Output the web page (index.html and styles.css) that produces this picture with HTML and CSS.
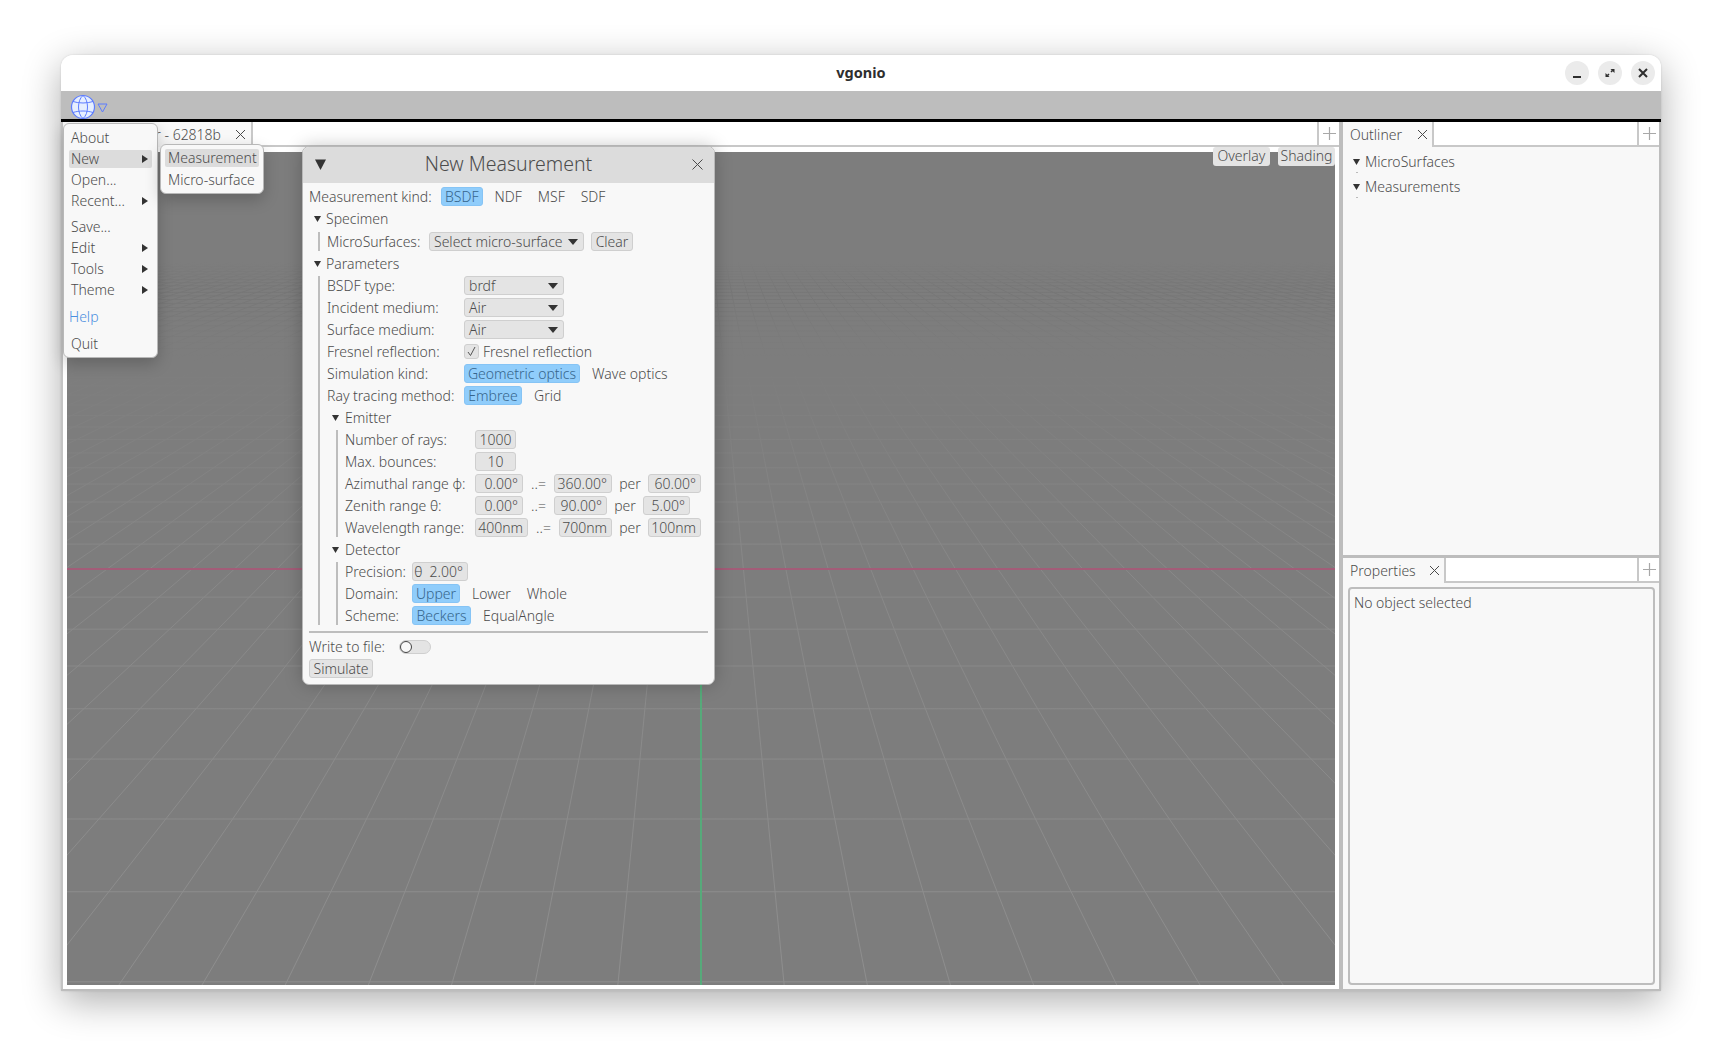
FILE: index.html
```html
<!DOCTYPE html>
<html lang="en">
<head>
<meta charset="utf-8">
<title>vgonio</title>
<link rel="stylesheet" href="styles.css">
</head>
<body>
<div class="window">
  <header class="titlebar">
    <span class="title">vgonio</span>
    <div class="wm">
      <span class="wm-btn"><svg width="24" height="24" viewBox="0 0 24 24"><path d="M8 16h8" class="wm-ic"/></svg></span>
      <span class="wm-btn"><svg width="24" height="24" viewBox="0 0 24 24"><path d="M12.500 8h4v4zM11.500 16h-4v-4z" class="wm-fill"/><path d="M14.500 9.500l-1.500 1.500M9.500 14.500l1.500-1.500" class="wm-thin"/></svg></span>
      <span class="wm-btn"><svg width="24" height="24" viewBox="0 0 24 24"><path d="M8 8l8 8M16 8l-8 8" class="wm-ic"/></svg></span>
    </div>
  </header>
  <div class="toolbar">
    <svg class="globe" width="26" height="26" viewBox="0 0 26 26"><circle cx="13" cy="13" r="11.500" class="globe-bg"/><path d="M13 1.500C7 6 7 20 13 24.500M13 1.500C19 6 19 20 13 24.500M3 7.500C9 9.500 17 9.500 23 7.500M3 18.500C9 16.500 17 16.500 23 18.500" class="globe-ln"/></svg>
    <svg class="globe-caret" width="11" height="10" viewBox="0 0 11 10"><path d="M1 1h9L5.500 9z" class="globe-ln"/></svg>
  </div>
  <div class="blackline"></div>
  <div class="workspace">
    <section class="left">
      <div class="tabbar tabbar-view">
        <div class="tab tab-view"><span>r - 62818b</span><svg class="x" width="11" height="11" viewBox="0 0 11 11"><path d="M1 1l9 9M10 1l-9 9"/></svg></div>
        <div class="tab-fill"></div>
        <div class="plus"><svg width="13" height="13" viewBox="0 0 13 13"><path d="M6.500 0v13M0 6.500h13"/></svg></div>
      </div>
      <div class="viewport-wrap">
        <div class="viewport">
          <svg id="grid" class="grid" viewBox="0 0 1268 833" preserveAspectRatio="none">
            <defs>
              <linearGradient id="fade" gradientUnits="userSpaceOnUse" x1="0" y1="0" x2="0" y2="833">
                <stop offset="0.130" stop-color="#7d7d7d"/>
                <stop offset="0.165" stop-color="#767676"/>
                <stop offset="0.200" stop-color="#797979"/>
                <stop offset="0.255" stop-color="#7d7d7d"/>
                <stop offset="0.300" stop-color="#7f7f7f"/>
                <stop offset="0.500" stop-color="#888888"/>
                <stop offset="1" stop-color="#8e8e8e"/>
              </linearGradient>
            </defs>
            <path id="grid-lines" class="grid-lines"/>
            <path class="axis-x" d="M0 417H1268"/>
            <path class="axis-y" d="M634 417V833"/>
          </svg>
          <div class="view-tools">
            <span class="btn">Overlay</span>
            <span class="btn">Shading</span>
          </div>
        </div>
      </div>
    </section>
    <div class="vsplit"></div>
    <aside class="right">
      <div class="tabbar">
        <div class="tab tab-outliner"><span>Outliner</span><svg class="x" width="11" height="11" viewBox="0 0 11 11"><path d="M1 1l9 9M10 1l-9 9"/></svg></div>
        <div class="tab-fill"></div>
        <div class="plus"><svg width="13" height="13" viewBox="0 0 13 13"><path d="M6.500 0v13M0 6.500h13"/></svg></div>
      </div>
      <div class="outliner">
        <div class="tree-item"><svg class="arrow" width="7" height="6" viewBox="0 0 7 6"><path d="M0 0h7L3.500 6z"/></svg><span>MicroSurfaces</span></div>
        <div class="tree-dot"></div>
        <div class="tree-item"><svg class="arrow" width="7" height="6" viewBox="0 0 7 6"><path d="M0 0h7L3.500 6z"/></svg><span>Measurements</span></div>
        <div class="tree-dot"></div>
      </div>
      <div class="hsplit"></div>
      <div class="tabbar">
        <div class="tab tab-props"><span>Properties</span><svg class="x" width="11" height="11" viewBox="0 0 11 11"><path d="M1 1l9 9M10 1l-9 9"/></svg></div>
        <div class="tab-fill"></div>
        <div class="plus"><svg width="13" height="13" viewBox="0 0 13 13"><path d="M6.500 0v13M0 6.500h13"/></svg></div>
      </div>
      <div class="props-wrap"><div class="props-box">No object selected</div></div>
    </aside>
  </div>

  <nav class="menu">
    <div class="mi">About</div>
    <div class="mi mi-on"><span>New</span><i class="mi-arrow"></i></div>
    <div class="mi">Open...</div>
    <div class="mi"><span>Recent...</span><i class="mi-arrow"></i></div>
    <div class="mi mi-save">Save...</div>
    <div class="mi"><span>Edit</span><i class="mi-arrow"></i></div>
    <div class="mi"><span>Tools</span><i class="mi-arrow"></i></div>
    <div class="mi"><span>Theme</span><i class="mi-arrow"></i></div>
    <div class="mi mi-gap mi-help">Help</div>
    <div class="mi mi-gap">Quit</div>
  </nav>
  <nav class="submenu">
    <div class="mi mi-on">Measurement</div>
    <div class="mi">Micro-surface</div>
  </nav>

  <div class="dialog">
    <div class="dlg-head">
      <svg width="11" height="11" viewBox="0 0 11 11" class="dlg-tri"><path d="M0 .5h11L5.500 11z"/></svg>
      <span class="dlg-title">New Measurement</span>
      <svg class="x dlg-x" width="11" height="11" viewBox="0 0 11 11"><path d="M.5.500l10 10M10.500.500l-10 10"/></svg>
    </div>
    <div class="dlg-body">
      <div class="row"><span class="lb-kind">Measurement kind:</span><span class="sel on">BSDF</span><span class="sel">NDF</span><span class="sel">MSF</span><span class="sel">SDF</span></div>

      <div class="head"><svg class="arrow" width="7" height="6" viewBox="0 0 7 6"><path d="M0 0h7L3.500 6z"/></svg><span>Specimen</span></div>
      <div class="sect sect-micro">
        <div class="row"><span class="lb-micro">MicroSurfaces:</span><span class="btn combo combo-wide"><span>Select micro-surface</span><svg class="caret" width="10" height="6" viewBox="0 0 10 6"><path d="M0 0h10L5 6z"/></svg></span><span class="btn clear">Clear</span></div>
      </div>

      <div class="head"><svg class="arrow" width="7" height="6" viewBox="0 0 7 6"><path d="M0 0h7L3.500 6z"/></svg><span>Parameters</span></div>
      <div class="sect">
        <div class="row"><span class="lb-par">BSDF type:</span><span class="btn combo"><span>brdf</span><svg class="caret" width="10" height="6" viewBox="0 0 10 6"><path d="M0 0h10L5 6z"/></svg></span></div>
        <div class="row"><span class="lb-par">Incident medium:</span><span class="btn combo"><span>Air</span><svg class="caret" width="10" height="6" viewBox="0 0 10 6"><path d="M0 0h10L5 6z"/></svg></span></div>
        <div class="row"><span class="lb-par">Surface medium:</span><span class="btn combo"><span>Air</span><svg class="caret" width="10" height="6" viewBox="0 0 10 6"><path d="M0 0h10L5 6z"/></svg></span></div>
        <div class="row"><span class="lb-par">Fresnel reflection:</span><span class="check"><svg width="11" height="11" viewBox="0 0 11 11"><path d="M2 6l2.500 3.500L9 1"/></svg></span><span>Fresnel reflection</span></div>
        <div class="row"><span class="lb-par">Simulation kind:</span><span class="sel on sel-geo">Geometric optics</span><span class="sel">Wave optics</span></div>
        <div class="row"><span class="lb-par">Ray tracing method:</span><span class="sel on sel-emb">Embree</span><span class="sel">Grid</span></div>

        <div class="head head-in"><svg class="arrow" width="7" height="6" viewBox="0 0 7 6"><path d="M0 0h7L3.500 6z"/></svg><span>Emitter</span></div>
        <div class="sect">
          <div class="row"><span class="lb-emit">Number of rays:</span><span class="btn num w41">1000</span></div>
          <div class="row"><span class="lb-emit">Max. bounces:</span><span class="btn num w41">10</span></div>
          <div class="row"><span class="lb-emit">Azimuthal range φ:</span><span class="btn num w48">0.00°</span><span class="op">..=</span><span class="btn num w58">360.00°</span><span class="per">per</span><span class="btn num w53">60.00°</span></div>
          <div class="row"><span class="lb-emit">Zenith range θ:</span><span class="btn num w48">0.00°</span><span class="op">..=</span><span class="btn num w53">90.00°</span><span class="per">per</span><span class="btn num w47">5.00°</span></div>
          <div class="row"><span class="lb-emit">Wavelength range:</span><span class="btn num w53">400nm</span><span class="op">..=</span><span class="btn num w53">700nm</span><span class="per">per</span><span class="btn num w53">100nm</span></div>
        </div>

        <div class="head head-in"><svg class="arrow" width="7" height="6" viewBox="0 0 7 6"><path d="M0 0h7L3.500 6z"/></svg><span>Detector</span></div>
        <div class="sect">
          <div class="row"><span class="lb-det">Precision:</span><span class="btn num w56">θ&nbsp;&nbsp;2.00°</span></div>
          <div class="row"><span class="lb-det">Domain:</span><span class="sel on sel-up">Upper</span><span class="sel">Lower</span><span class="sel">Whole</span></div>
          <div class="row"><span class="lb-det">Scheme:</span><span class="sel on sel-bec">Beckers</span><span class="sel">EqualAngle</span></div>
        </div>
      </div>

      <div class="rule"></div>
      <div class="row"><span class="lb-write">Write to file:</span><span class="toggle"><i></i></span></div>
      <div class="row"><span class="btn sim">Simulate</span></div>
    </div>
  </div>
</div>
<script src="grid.js"></script>
</body>
</html>
```

FILE: styles.css
```css
* { box-sizing: border-box; }
html, body { margin: 0; height: 100%; background: #fff; overflow: hidden; }
body {
  font-family: "Noto Sans", sans-serif;
  font-size: 14px;
  font-weight: 300;
  color: #4c4c4c;
  padding: 55px 0 0 61px;
}
svg { display: block; flex: none; }

.window {
  position: relative;
  width: 1600px;
  height: 936px;
  display: flex;
  flex-direction: column;
  background: #f8f8f8;
  border-radius: 12px 12px 2px 2px;
  box-shadow: 0 10px 38px rgba(0, 0, 0, .32), 0 0 2px rgba(0, 0, 0, .15);
}
.titlebar {
  height: 36px;
  flex: none;
  background: #fff;
  border-radius: 12px 12px 0 0;
  display: flex;
  align-items: center;
  justify-content: center;
  position: relative;
  padding-bottom: 2px;
}
.title { font-weight: 700; font-size: 14.5px; color: #2e2e2e; }
.wm { position: absolute; right: 6px; top: 6px; display: flex; gap: 9px; }
.wm-btn { width: 24px; height: 24px; border-radius: 50%; background: #ebebeb; }
.wm-ic { stroke: #2e2e2e; stroke-width: 2; fill: none; }
.wm-fill { fill: #2e2e2e; }
.wm-thin { stroke: #2e2e2e; stroke-width: 1.500; }

.toolbar {
  height: 28px;
  flex: none;
  background: #bdbdbd;
  display: flex;
  align-items: center;
  padding: 3px 0 0 9px;
  gap: 1px;
}
.globe-bg { fill: #e6efff; stroke: #5c7cff; stroke-width: 1.200; }
.globe-ln { fill: none; stroke: #5c7cff; stroke-width: 1; }
.globe-caret { margin-top: 3px; }
.blackline { height: 3px; flex: none; background: #000; }

.workspace { flex: 1; display: flex; min-height: 0; border-bottom: 2px solid #bdbdbd; }
.left { flex: 1; display: flex; flex-direction: column; min-width: 0; border-left: 2px solid #c4c4c4; }
.vsplit { width: 8px; flex: none; background: linear-gradient(90deg, #fff 0 4px, #bdbdbd 4px); }
.right { width: 318px; flex: none; display: flex; flex-direction: column; border-right: 2px solid #bdbdbd; }

.tabbar { height: 25px; flex: none; display: flex; background: #fff; border-bottom: 2px solid #c8c8c8; }
.tabbar-view { margin-right: -4px; position: relative; }
.tab {
  display: flex;
  align-items: center;
  background: #f8f8f8;
  border-right: 2px solid #c8c8c8;
  margin-bottom: -2px;
}
.tab-view { width: 190px; justify-content: flex-end; padding-right: 5px; gap: 14px; }
.tab-outliner { width: 91px; padding: 0 4px 0 7px; justify-content: space-between; }
.tab-props { width: 103px; padding: 0 4px 0 7px; justify-content: space-between; }
.x { stroke: #4a4a4a; stroke-width: 1; fill: none; }
.tab-fill { flex: 1; }
.plus {
  width: 22px;
  display: flex;
  align-items: center;
  justify-content: center;
  border-left: 2px solid #c8c8c8;
}
.plus path { stroke: #a8a8a8; stroke-width: 1.200; fill: none; }

.viewport-wrap { flex: 1; min-height: 0; padding: 5px 0 4px 4px; background: #fff; }
.viewport { position: relative; height: 100%; background: #7d7d7d; }
.grid { position: absolute; inset: 0; width: 100%; height: 100%; }
.grid-lines { fill: none; stroke: url(#fade); stroke-width: 1; }
.axis-x { stroke: #a35c78; stroke-width: 2; fill: none; }
.axis-y { stroke: #56aa7a; stroke-width: 2; fill: none; }
.view-tools { position: absolute; top: -5px; right: 0; display: flex; gap: 8px; }

.btn {
  display: inline-flex;
  align-items: center;
  height: 19px;
  padding: 0 4px;
  background: #e4e4e4;
  border: 1px solid #cfcfcf;
  border-radius: 3px;
  white-space: nowrap;
}
.view-tools .btn { width: 57px; justify-content: center; border: 0; padding: 0 0 2px; }

.outliner { height: 408px; flex: none; padding: 5px 10px 0 10px; display: flex; flex-direction: column; }
.tree-item { height: 19px; display: flex; align-items: center; gap: 5px; }
.tree-dot { height: 6px; position: relative; }
.tree-dot::after { content: ""; position: absolute; left: 3px; top: 1px; width: 2px; height: 1px; background: #bbb; }
.arrow { fill: #333; }
.hsplit { height: 3px; flex: none; background: #bdbdbd; }
.props-wrap { flex: 1; min-height: 0; padding: 4px 4px 4px 5px; }
.props-box {
  height: 100%;
  border: 2px solid #bdbdbd;
  border-radius: 4px;
  padding: 4px 4px;
}

.menu, .submenu, .dialog {
  position: absolute;
  background: #f8f8f8;
  border: 1px solid #b8b8b8;
  box-shadow: 0 6px 16px rgba(0, 0, 0, .2);
}
.menu {
  left: 2px;
  top: 68px;
  width: 95px;
  height: 235px;
  border-radius: 6px;
  padding: 5px 5px;
  display: flex;
  flex-direction: column;
  gap: 3px;
}
.submenu {
  left: 99px;
  top: 89px;
  width: 104px;
  height: 50px;
  border-radius: 6px;
  padding: 4px 4px;
  display: flex;
  flex-direction: column;
  gap: 4px;
}
.mi {
  height: 18px;
  flex: none;
  display: flex;
  align-items: center;
  justify-content: space-between;
  padding: 0 4px 1px 2px;
  border-radius: 2px;
  white-space: nowrap;
}
.submenu .mi { padding-left: 3px; }
.mi-on { background: #dcdcdc; }
.mi-save { margin-top: 5px; }
.mi-gap { margin-top: 6px; }
.mi-help { color: #4a8fe0; padding-left: 0; }
.mi-arrow { width: 0; height: 0; border-left: 6px solid #333; border-top: 4.500px solid transparent; border-bottom: 4.500px solid transparent; }

.dialog {
  left: 241px;
  top: 91px;
  width: 413px;
  height: 539px;
  border-radius: 7px;
  box-shadow: 0 0 18px rgba(0, 0, 0, .22);
}
.dlg-head {
  height: 36px;
  background: #dcdcdc;
  border-radius: 6px 6px 0 0;
  position: relative;
  display: flex;
  align-items: center;
  justify-content: center;
  padding-bottom: 4px;
}
.dlg-title { font-size: 19.500px; }
.dlg-tri { position: absolute; left: 12px; top: 12px; fill: #333; }
.dlg-x { position: absolute; right: 11px; top: 12px; }
.dlg-body { padding: 4px 6px; display: flex; flex-direction: column; gap: 3px; }

.row { min-height: 19px; display: flex; align-items: center; white-space: nowrap; }
.sel { height: 19px; display: inline-flex; align-items: center; padding: 0 4px; margin-right: 8px; border-radius: 3px; }
.sel.on { background: #90cdfb; border: 1px solid #86c4f5; color: #36658c; padding: 0 3px; justify-content: center; }
.sel-geo { width: 116px; }
.sel-emb { width: 58px; }
.sel-up { width: 48px; }
.sel-bec { width: 59px; }

.lb-kind { width: 132px; }
.lb-micro { width: 102px; }
.lb-par { width: 137px; }
.lb-emit { width: 130px; }
.lb-det { width: 67px; }
.lb-write { width: 90px; }

.head { height: 19px; display: flex; align-items: center; gap: 5px; padding-left: 5px; }
.head-in { gap: 6px; }
.sect { margin-left: 9px; border-left: 2px solid #bdbdbd; padding-left: 7px; display: flex; flex-direction: column; gap: 3px; }
.sect-micro { margin-top: 1px; }

.combo { justify-content: space-between; width: 100px; padding-right: 5px; }
.combo-wide { width: 155px; }
.caret { fill: #333; }
.clear { margin-left: 7px; width: 42px; justify-content: center; }
.check { width: 15px; height: 15px; margin-right: 4px; background: #e4e4e4; border: 1px solid #cfcfcf; border-radius: 3px; display: flex; align-items: center; justify-content: center; }
.check path { fill: none; stroke: #555; stroke-width: 1; }

.num { justify-content: flex-end; }
.w41 { width: 41px; justify-content: center; }
.w47 { width: 47px; }
.w48 { width: 48px; }
.w53 { width: 53px; }
.w56 { width: 56px; }
.w58 { width: 58px; }
.op { width: 31px; text-align: center; }
.per { width: 36px; text-align: center; }

.rule { height: 2px; background: #bdbdbd; margin: 3px 0 1px; }
.toggle { width: 32px; height: 14px; border-radius: 7px; background: #e4e4e4; border: 1px solid #cfcfcf; position: relative; }
.toggle i { position: absolute; left: 0; top: 0; width: 12px; height: 12px; border-radius: 50%; background: #f8f8f8; border: 1px solid #444; }
.sim { width: 64px; justify-content: center; }
```

FILE: grid.js
```js
// Ground-plane grid: perspective rows and columns converging on one vanishing point.
(function () {
  var W = 1268, H = 833;
  var ox = 67, oy = 152;            // viewport origin in window coordinates
  var vx = 701 - ox, vy = 136 - oy; // vanishing point
  var farY = 260 - oy;              // grid ends here
  var d = "";
  var i, y, u;
  for (i = -41; i <= 8; i++) {
    u = 1 / (0.0023095 - 0.0001409 * i);
    y = 569 + (u - 433) - oy;
    if (y >= farY && y <= H) d += "M0 " + y.toFixed(2) + "H" + W;
  }
  var k = 82.9 / 846.3;
  for (i = -90; i <= 90; i++) {
    d += "M" + (vx + i * k * (farY - vy)).toFixed(2) + " " + farY +
         "L" + (vx + i * k * (H - vy)).toFixed(2) + " " + H;
  }
  document.getElementById("grid-lines").setAttribute("d", d);
})();
```
